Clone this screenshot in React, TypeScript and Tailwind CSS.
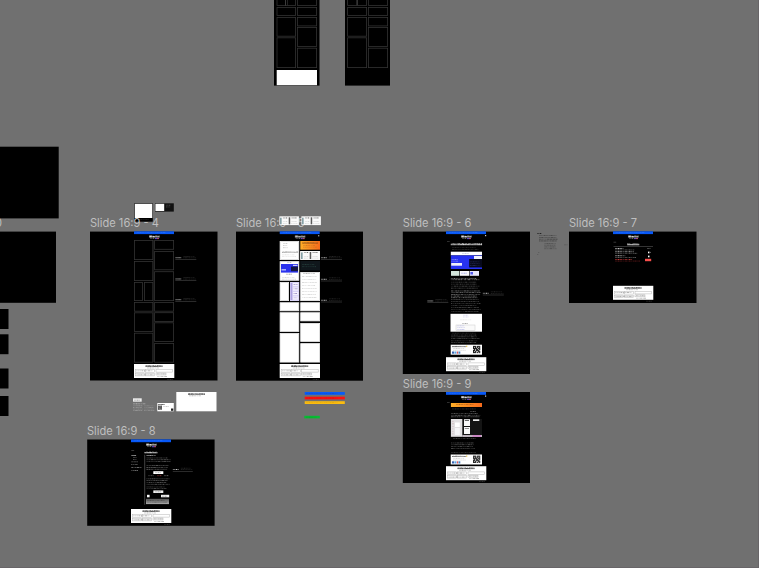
import type { ReactNode } from "react";

type Box = [number, number, number, number];

// Rectangle given by its two corners, in canvas units.
function R({ b, f, o = 1 }: { b: Box; f: string; o?: number }) {
  return <rect x={b[0]} y={b[1]} width={b[2] - b[0]} height={b[3] - b[1]} fill={f} opacity={o} />;
}

function random(seed: number) {
  let s = Math.round(seed * 7919) + 13;
  return () => {
    s = (s * 1103515245 + 12345) % 2147483648;
    return s / 2147483648;
  };
}

// Lines of copy, too small to read at this zoom, shown as runs of word-sized dashes.
function Greek({ b, f = "#aaa", step = 1.8, h = 0.7, o = 1, seed = 1 }: { b: Box; f?: string; step?: number; h?: number; o?: number; seed?: number }) {
  const words: ReactNode[] = [];
  const rnd = random(seed);
  for (let y = b[1]; y < b[3] - 0.2; y += step) {
    let x = b[0];
    const end = b[2] - rnd() * (b[2] - b[0]) * 0.15;
    while (x < end) {
      const w = Math.min(0.6 + rnd() * 2.2, end - x);
      words.push(<rect key={words.length} x={x} y={y} width={w} height={h} fill={f} opacity={0.4 + rnd() * 0.6} />);
      x += w + 0.4;
    }
  }
  return <g opacity={o}>{words}</g>;
}

// A bold heading: letter-sized blocks of uneven height and weight.
function Title({ b, f = "#fff", seed = 1 }: { b: Box; f?: string; seed?: number }) {
  const rnd = random(seed);
  const letters: ReactNode[] = [];
  const tall = b[3] - b[1];
  for (let x = b[0]; x < b[2]; x += 0.95) {
    const drop = rnd() * 0.35 * tall;
    letters.push(<rect key={letters.length} x={x} y={b[1] + drop} width={0.85} height={tall - drop} fill={f} opacity={0.6 + rnd() * 0.4} />);
  }
  return <>{letters}</>;
}

function Cells({ cells, f = "none", stroke = "#333" }: { cells: Box[]; f?: string; stroke?: string }) {
  return (
    <>
      {cells.map((c, i) => (
        <rect key={i} x={c[0] + 0.4} y={c[1] + 0.4} width={c[2] - c[0] - 0.8} height={c[3] - c[1] - 0.8} fill={f} stroke={stroke} strokeWidth={0.8} />
      ))}
    </>
  );
}

function Header({ x, y = 231.3 }: { x: number; y?: number }) {
  return (
    <>
      <R b={[x, y, x + 40, y + 2.8]} f="#0758f8" />
      <Greek b={[x + 3, y + 1, x + 37, y + 1.6]} f="#5b9bff" o={0.4} />
      <Title b={[x + 15.2, y + 4, x + 25.2, y + 6.2]} seed={2} />
      <Greek b={[x + 16, y + 6.9, x + 21, y + 7.6]} f="#999" />
      <R b={[x + 21, y + 6.8, x + 23, y + 7.8]} f="#6a50d8" />
      <R b={[x + 23, y + 6.8, x + 25, y + 7.8]} f="#c0507c" />
    </>
  );
}

function Footer({ x, y }: { x: number; y: number }) {
  return (
    <>
      <R b={[x, y, x + 40.3, y + 14]} f="#fff" />
      <Title b={[x + 11.5, y + 1.2, x + 28, y + 2.9]} f="#222" seed={6} />
      <Greek b={[x + 13, y + 3.6, x + 27, y + 4.2]} f="#888" />
      <g fill="none" stroke="#b5b5b5" strokeWidth={0.5}>
        <rect x={x + 1.5} y={y + 5.7} width={9} height={2.6} />
        <rect x={x + 11.5} y={y + 5.7} width={9} height={2.6} />
        <rect x={x + 22} y={y + 5.7} width={16.5} height={2.4} />
        <rect x={x + 1.5} y={y + 9.5} width={9} height={2.4} />
        <rect x={x + 11.5} y={y + 9.5} width={9} height={2.4} />
        <rect x={x + 22} y={y + 9} width={10} height={2} />
      </g>
      <Greek b={[x + 2.5, y + 6.5, x + 20, y + 11.5]} f="#555" step={4} o={0.7} seed={3} />
      <Greek b={[x + 23, y + 9.6, x + 33, y + 12.5]} f="#666" step={2.4} o={0.7} seed={4} />
      <Greek b={[x + 33, y + 15, x + 40, y + 15.6]} f="#888" o={0.5} />
    </>
  );
}

function Note({ x, y, w = 21 }: { x: number; y: number; w?: number }) {
  return (
    <>
      <Greek b={[x, y + 1.3, x + 7, y + 2]} f="#ddd" h={0.9} />
      <Greek b={[x + 8, y, x + w, y + 2.4]} f="#777" step={1.5} o={0.5} />
      <R b={[x, y + 3.2, x + w, y + 3.8]} f="#777" o={0.6} />
    </>
  );
}

// QR symbol built from a small module grid.
function Qr({ x, y, s = 7.2 }: { x: number; y: number; s?: number }) {
  const rows = ["1110111", "1010101", "1111011", "0101101", "1101110", "1010011", "1110101"];
  const m = s / 7;
  return (
    <>
      <R b={[x, y, x + s, y + s]} f="#bbb" />
      {rows.flatMap((r, j) => r.split("").map((c, i) => (c === "1" ? <rect key={`${i}-${j}`} x={x + i * m} y={y + j * m} width={m} height={m} fill="#181818" /> : null)))}
    </>
  );
}

function Contact({ y }: { y: number }) {
  return (
    <>
      <R b={[450.7, y, 482, y + 10]} f="#fff" />
      <Title b={[452, y + 1.2, 465.5, y + 2.4]} f="#333" />
      <R b={[466, y + 1, 467.3, y + 2.3]} f="#e5c558" />
      <Greek b={[453, y + 3.4, 466, y + 5.5]} f="#999" o={0.7} />
      <R b={[452, y + 6.8, 454, y + 9]} f="#3a66b0" />
      <R b={[454.4, y + 6.8, 456.4, y + 9]} f="#5aa5e4" />
      <R b={[456.8, y + 6.8, 458.2, y + 9]} f="#d85662" />
      <R b={[458.5, y + 6.8, 460.3, y + 9]} f="#4584c4" />
      <Qr x={473} y={y + 1.2} />
    </>
  );
}

// A node on the canvas. Its box is widened to whole pixels, so the artwork keeps fractional edges.
function Frame({ b, fill = true, children }: { b: Box; fill?: boolean; children?: ReactNode }) {
  const x = Math.floor(b[0]);
  const y = Math.floor(b[1]);
  const w = Math.ceil(b[2]) - x;
  const h = Math.ceil(b[3]) - y;
  return (
    <div className="absolute" style={{ left: x, top: y, width: w, height: h }}>
      <svg className="block size-full" viewBox={`${x} ${y} ${w} ${h}`}>
        {fill && <R b={b} f="#000" />}
        {children}
      </svg>
    </div>
  );
}

function Label({ x, y, children }: { x: number; y: number; children: ReactNode }) {
  return (
    <div className="absolute whitespace-nowrap text-[11.1px] leading-4 text-[#bfbfbf]" style={{ left: x, top: y }}>
      {children}
    </div>
  );
}

const wireLeft = (l: number, r: number): Box[] => [
  [l, -4, r, 5.8], [l, 7, r, 15.8], [l, 17, r, 36.6], [l, 37.4, r, 68],
];
const wireRight = (l: number, r: number): Box[] => [
  [l, -4, r, 5.8], [l, 7, r, 15.8], [l, 17, r, 26.3], [l, 27, r, 46.8], [l, 47.8, r, 68],
];

const slide4Cells: Box[] = [
  [134, 240, 153.2, 260], [134, 261, 153.2, 281], [134, 282, 142.8, 301], [144, 282, 153.2, 301],
  [134, 302, 153.2, 311.6], [134, 312.4, 153.2, 332], [134, 332.8, 153.2, 362.6],
  [154.2, 240, 174, 249.7], [154.2, 251, 174, 270.2], [154.2, 271.3, 174, 301], [154.2, 302, 174, 311.6],
  [154.2, 312.3, 174, 321.8], [154.2, 322.4, 174, 342], [154.2, 343, 174, 362.6],
];

const slide5Cells: Box[] = [
  [279.7, 241, 299.2, 260], [279.7, 261.2, 299.2, 280.7], [279.7, 282, 289, 301],
  [279.7, 302.3, 299.2, 311.2], [279.7, 312.3, 299.2, 331.8], [279.7, 333, 299.2, 362.5],
  [300.3, 251, 320, 260], [300.3, 272, 320, 301], [300.3, 302.3, 320, 311.2],
  [300.3, 312.3, 320, 321.3], [300.3, 323, 320, 341.8], [300.3, 343.2, 320, 362.5],
];

const plainFrames: Box[] = [
  [0, 146.7, 58.7, 218.4], [0, 231.6, 56, 302.8], [0, 309, 8.5, 329], [0, 334.3, 8.5, 354.2],
  [0, 368.5, 8.5, 388.5], [0, 396, 8.5, 416],
];

function Cards({ x, y }: { x: number; y: number }) {
  return (
    <>
      <R b={[x, y, x + 19.5, y + 8.8]} f="#fafafa" />
      <R b={[x + 1, y + 1.4, x + 2, y + 8]} f="#3b6670" />
      <R b={[x + 9.3, y + 1, x + 10.8, y + 8]} f="#333" o={0.8} />
      <Greek b={[x + 3.5, y + 1.3, x + 8.5, y + 3]} f="#333" />
      <Greek b={[x + 3.5, y + 5, x + 8.5, y + 7.5]} f="#aaa" o={0.6} />
      <Greek b={[x + 12, y + 1.3, x + 18.5, y + 3]} f="#333" />
      <Greek b={[x + 12, y + 5, x + 18.5, y + 7.5]} f="#aaa" o={0.6} />
    </>
  );
}

export default function App() {
  return (
    <main className="relative h-[568px] w-[759px] overflow-hidden border-r border-b border-[#686568] bg-[#707070] font-['Inter','Liberation_Sans',sans-serif]">
      <Frame b={[274, 0, 319.5, 85.6]}>
        <Cells cells={[...wireLeft(276.6, 296), ...wireRight(297, 317)]} />
        <R b={[285, 0, 285.7, 5.5]} f="#555" />
        <R b={[287, 0, 287.7, 5.5]} f="#333" />
        <R b={[276.7, 70, 317, 85.2]} f="#fff" />
      </Frame>
      <Frame b={[345, 0, 390, 85.6]}>
        <Cells cells={[...wireLeft(347.2, 367), ...wireRight(368, 388)]} />
        <R b={[356.3, 0, 358, 5.5]} f="#333" />
      </Frame>

      {plainFrames.map((b, i) => (
        <Frame key={i} b={b} />
      ))}
      <Label x={-5} y={215}>0</Label>

      {/* Loose pieces over slide 4 */}
      <Frame b={[134, 203, 174, 222]} fill={false}>
        <R b={[134.3, 203.3, 152.8, 221.7]} f="#000" />
        <R b={[134.8, 203.8, 152.3, 218]} f="#fff" />
        <Greek b={[135.5, 219.3, 151, 221]} f="#666" o={0.6} />
        <R b={[155, 203.3, 173.8, 211.6]} f="#111" />
        <R b={[155.4, 203.8, 164.2, 211]} f="#fff" />
        <Greek b={[166, 204.8, 171, 207.5]} f="#888" o={0.7} />
      </Frame>

      <Frame b={[90, 231.6, 217.5, 380.5]}>
        <R b={[153.2, 240, 154.2, 362]} f="#1c1c1c" />
        <Cells cells={slide4Cells} />
        <Header x={134} />
        <Note x={175.3} y={256} />
        <Note x={175.3} y={277.2} />
        <Note x={175.3} y={298} />
        <Footer x={134} y={364} />
      </Frame>
      <Label x={90} y={215}>Slide 16:9 - 4</Label>

      {/* Loose pieces under slide 4 */}
      <Frame b={[133, 391, 218, 412]} fill={false}>
        <R b={[133, 398.3, 141.7, 401.7]} f="#eee" />
        <Greek b={[134, 399.8, 141, 400.3]} f="#777" />
        <Greek b={[133, 403.5, 148, 404.3]} f="#ddd" />
        <Greek b={[133, 405.5, 143, 411]} f="#d4d4d4" step={1.6} o={0.55} seed={5} />
        <Greek b={[144, 405.5, 155, 411]} f="#d4d4d4" step={1.6} o={0.45} seed={6} />
        <R b={[157.3, 403, 173.8, 411.3]} f="#fff" />
        <Title b={[158, 404, 164, 405]} f="#222" />
        <Qr x={158} y={405.7} s={4} />
        <R b={[171, 408.5, 173.3, 410.8]} f="#222" />
        <Greek b={[163, 406.3, 170, 407]} f="#aaa" />
        <R b={[176.3, 392, 216.5, 411.3]} f="#fff" />
        <Title b={[188, 393.2, 205, 394.8]} f="#222" seed={6} />
        <Greek b={[189, 395.5, 203, 396.1]} f="#888" />
      </Frame>

      <Frame b={[236, 231.6, 363, 380.7]}>
        <Header x={279.7} />
        <R b={[318, 235.3, 319.3, 236.3]} f="#ccc" />
        <Cells cells={slide5Cells} f="#fff" stroke="#f0f0f0" />
        {/* first card: short list with a heading under it */}
        <Greek b={[283, 243, 288, 249]} f="#777" o={0.6} step={2.2} />
        <Title b={[282, 251.5, 297.5, 252.6]} f="#666" />
        <Greek b={[282, 254.5, 297, 258]} f="#aaa" o={0.5} />
        {/* hero preview */}
        <Greek b={[287, 262.3, 292, 263]} f="#999" />
        <R b={[281, 264, 298, 272.6]} f="#2a32ed" />
        <R b={[291, 266.6, 298, 271.2]} f="#131540" />
        <R b={[293, 264.8, 297.5, 266]} f="#ccccfa" />
        <R b={[281.5, 269.3, 286, 270.4]} f="#dde0ff" />
        <Greek b={[286, 273.8, 293, 275]} f="#666" />
        <Greek b={[282, 277, 297, 279.5]} f="#999" o={0.6} />
        <R b={[290, 282, 299.2, 301]} f="#d9d3f6" />
        <R b={[290.6, 283, 292.2, 300]} f="#8d80d2" o={0.6} />
        {[283, 287.5, 292, 296.5].map((y) => (
          <g key={y}>
            <R b={[293, y, 298.3, y + 3.1]} f="#f5f2ff" />
            <Greek b={[293.5, y + 1, 297.8, y + 2]} f="#7668ae" seed={y} />
          </g>
        ))}
        <defs>
          <linearGradient id="sunset" x1="0" x2="1">
            <stop offset="0" stopColor="#ffae28" />
            <stop offset="1" stopColor="#f66b1c" />
          </linearGradient>
        </defs>
        <rect x={300.3} y={241} width={19.7} height={8.7} fill="url(#sunset)" />
        <Title b={[302, 242.2, 318, 243.6]} f="#704018" seed={3} />
        <Greek b={[303, 245, 317, 248]} f="#8d4e1d" o={0.55} />
        <Cards x={300.4} y={251} />
        <R b={[300.3, 261, 320, 270.5]} f="#10171c" />
        <Greek b={[302, 264, 317, 268]} f="#3e7061" step={2.4} o={0.65} />
        <Greek b={[303, 273.3, 317, 274.2]} f="#888" />
        <Greek b={[302, 276, 317, 300]} f="#888" o={0.5} step={3} h={0.6} seed={8} />
        <Note x={321} y={256} />
        <Note x={321} y={277.5} />
        <Note x={321} y={298.5} />
        <Footer x={279.7} y={364} />
      </Frame>
      <Label x={236} y={215}>Slide 16:9 - 5</Label>
      <Frame b={[279, 216, 322, 226]} fill={false}>
        <Cards x={279.4} y={216.3} />
        <Cards x={301.4} y={216.3} />
      </Frame>

      {/* Notification bars */}
      <Frame b={[304, 391, 346, 420]} fill={false}>
        <R b={[304.7, 392, 344.8, 394.8]} f="#075bf8" />
        <Greek b={[306, 393.1, 343, 393.8]} f="#0038a0" o={0.4} />
        <R b={[304.7, 396.7, 344.8, 399.4]} f="#ff1010" />
        <Greek b={[306, 397.7, 343, 398.3]} f="#960808" o={0.45} />
        <R b={[304.7, 401.2, 344.8, 404]} f="#fbbc10" />
        <Greek b={[306, 402.3, 343, 402.9]} f="#b07c00" o={0.35} />
        <R b={[304.3, 415.8, 319.8, 418.4]} f="#08bd33" />
        <Greek b={[306, 416.8, 318, 417.3]} f="#087c22" o={0.5} />
      </Frame>

      <Frame b={[402.8, 231.6, 530, 374]}>
        <Header x={446} />
        <R b={[485, 235, 486.2, 236.2]} f="#ccc" />
        <Greek b={[447, 241.3, 450.5, 241.9]} f="#777" />
        <Title b={[450.8, 243.1, 481.5, 245.2]} seed={4} />
        <Greek b={[452, 247, 480, 250]} f="#777" step={2.2} o={0.5} />
        <R b={[450.8, 251.7, 482, 255.4]} f="#fff" />
        <Greek b={[462, 253.3, 470, 253.8]} f="#7075a8" o={0.6} />
        <R b={[450.8, 255.4, 482, 269]} f="#2732f1" />
        <R b={[469.2, 259, 482, 267.4]} f="#07091b" />
        <R b={[474, 256, 482, 259]} f="#f1f1fb" />
        <Greek b={[451.5, 259, 459, 261.5]} f="#b8bbff" />
        <R b={[451.2, 263, 462, 265.7]} f="#eeeefa" />
        <Greek b={[470, 261.5, 481, 266]} f="#444b88" o={0.7} />
        <R b={[451, 271, 459.4, 275.8]} f="#d3e6dc" />
        <R b={[460, 271, 469, 275.8]} f="#f8f8fb" />
        <R b={[469.6, 271, 479, 275.8]} f="#e6e6fd" />
        <R b={[470.4, 272, 473, 274.5]} f="#5058ed" />
        <Greek b={[461, 272.8, 468, 274.3]} f="#777de2" />
        <Greek b={[450.8, 278, 481, 280]} f="#ddd" step={1.4} o={0.8} />
        <Greek b={[451, 281.8, 480, 289]} f="#999" step={2} o={0.65} seed={11} />
        <Greek b={[451, 290.6, 481, 298]} f="#bbb" step={1.7} o={0.8} seed={12} />
        <Greek b={[451, 299, 481, 312]} f="#999" step={2} o={0.6} seed={13} />
        <R b={[450.5, 313.8, 482, 331.7]} f="#fff" />
        <Greek b={[463, 314.8, 469, 317]} f="#a0a0d8" o={0.7} />
        <Greek b={[460, 319.5, 473, 321]} f="#bbb" o={0.5} />
        <Greek b={[462, 323, 469, 323.5]} f="#777" />
        <rect x={456} y={325} width={19} height={5.5} fill="#fafafa" stroke="#ccc" strokeWidth={0.5} />
        <Greek b={[457, 325.5, 466, 330]} f="#999ade" o={0.7} />
        <Greek b={[452, 332.8, 480, 333.5]} f="#777" o={0.6} />
        <Greek b={[451, 334.7, 481, 339]} f="#aaa" o={0.6} />
        <Greek b={[451, 340.5, 481, 343.3]} f="#999" o={0.6} seed={4} />
        <Contact y={344.7} />
        <Note x={482.8} y={291.5} />
        <Note x={427.3} y={299.2} />
        <Footer x={446} y={357.2} />
      </Frame>
      <Label x={402.8} y={215}>Slide 16:9 - 6</Label>

      {/* Loose list beside slide 6 */}
      <Frame b={[536, 231, 569, 257]} fill={false}>
        <Greek b={[537, 233, 542, 233.8]} f="#111" h={0.9} />
        <Greek b={[539, 235.2, 558, 241]} f="#222" step={1.8} o={0.75} seed={3} />
        <Greek b={[544, 243, 557, 250]} f="#333" step={1.8} o={0.7} seed={7} />
        <Greek b={[564, 244.5, 568, 245]} f="#333" o={0.6} />
        <Greek b={[538, 252, 539.5, 253]} f="#333" o={0.7} />
        <Greek b={[537, 254, 538.5, 255]} f="#333" o={0.7} />
      </Frame>

      <Frame b={[569, 231.6, 696.5, 303]}>
        <Header x={613} />
        <Greek b={[613.5, 241.8, 617, 242.4]} f="#888" />
        <Title b={[627, 243.3, 639, 245.3]} seed={5} />
        <R b={[613.5, 246.4, 653, 247]} f="#555" />
        <Greek b={[615, 248, 625, 249]} f="#eee" h={0.9} />
        <Greek b={[615, 249.6, 638, 250.3]} f="#999" />
        <Greek b={[647, 248.2, 651, 249]} f="#aaa" />
        <Greek b={[615, 251.3, 637, 252.4]} f="#ddd" h={0.9} />
        <Greek b={[615, 252.9, 641, 253.8]} f="#999" />
        <R b={[648, 251.6, 649.5, 253.3]} f="#fff" />
        <R b={[649.5, 251.9, 651, 253]} f="#555" />
        <Greek b={[615, 255.3, 627, 256.2]} f="#ddd" h={0.9} />
        <Greek b={[615, 257, 640, 257.7]} f="#999" />
        <R b={[648, 255.6, 649.5, 257.3]} f="#fff" />
        <Greek b={[615, 259, 635, 260]} f="#ec4141" h={0.9} />
        <Greek b={[615, 260.7, 644, 261.4]} f="#982929" />
        <R b={[645, 258.8, 651.2, 261.2]} f="#f94f4c" />
        <Footer x={613} y={285.8} />
      </Frame>
      <Label x={569} y={215}>Slide 16:9 - 7</Label>

      <Frame b={[402.8, 392, 530, 483]}>
        <Header x={446} y={392} />
        <R b={[485, 395.5, 486.2, 396.7]} f="#ccc" />
        <Greek b={[447, 402.3, 450.5, 402.9]} f="#777" />
        <rect x={450.9} y={403} width={31.1} height={4} fill="url(#sunset)" />
        <Greek b={[456, 404, 477, 405]} f="#8f4d17" h={0.9} o={0.8} />
        <Greek b={[452, 408.6, 480, 409.2]} f="#888" o={0.6} />
        <Greek b={[470, 411, 477, 411.5]} f="#888" />
        <Greek b={[451, 413.3, 482, 417.5]} f="#bbb" step={1.6} o={0.7} />
        <R b={[450.9, 419, 482, 436.8]} f="#141414" />
        <R b={[450.9, 419, 462.3, 436.8]} f="#e2e0e2" />
        <R b={[455, 422.5, 459.8, 427]} f="#fff" />
        <R b={[455, 428, 459.8, 435]} f="#f5f5f7" />
        <Greek b={[452, 421, 454, 434]} f="#ba8f94" o={0.7} step={2.5} />
        <R b={[464, 419.2, 470, 426]} f="#fafafa" />
        <R b={[464, 427, 470, 434]} f="#fafafa" />
        <R b={[464.8, 420, 469, 421]} f="#666" />
        <R b={[464.8, 428, 469, 428.8]} f="#777" />
        <R b={[473, 419.3, 479.3, 421]} f="#ececec" />
        <R b={[462.3, 435.2, 482, 436.8]} f="#e8dce8" />
        <R b={[472.5, 435.4, 481, 436.6]} f="#d46bc8" />
        <Greek b={[453, 438.3, 480, 440]} f="#aaa" step={1.5} o={0.6} />
        <Greek b={[451, 442.6, 475, 449.5]} f="#999" step={1.8} o={0.65} seed={9} />
        <Greek b={[451, 452, 480, 452.8]} f="#999" o={0.5} />
        <Contact y={454.5} />
        <Footer x={446} y={466.2} />
      </Frame>
      <Label x={402.8} y={376}>Slide 16:9 - 9</Label>

      <Frame b={[87.2, 439.5, 214.6, 525.8]}>
        <Header x={131} y={439.4} />
        <Greek b={[131.3, 450.2, 135, 450.8]} f="#888" />
        <Title b={[144.3, 451.6, 157.5, 453.3]} seed={3} />
        <Greek b={[131.3, 455, 137, 455.9]} f="#eee" h={0.9} />
        <Greek b={[133, 457, 137, 459.5]} f="#888" step={2} />
        {[461.5, 464.3, 467.2, 470.2].map((y, i) => (
          <Greek key={y} b={[131.3, y, i === 2 ? 143 : 138, y + 0.6]} f="#aaa" h={0.7} seed={i + 2} />
        ))}
        <R b={[144.6, 454.7, 145.1, 504.7]} f="#888" />
        <Greek b={[146.4, 455, 157.5, 456]} f="#ddd" h={0.9} />
        <Greek b={[146.4, 457.6, 171, 463]} f="#aaa" step={1.8} o={0.7} />
        <Greek b={[146.4, 465.3, 170, 470]} f="#aaa" step={1.8} o={0.7} seed={2} />
        <R b={[153.3, 471.2, 163.3, 474]} f="#fff" />
        <Greek b={[155, 472.4, 162, 472.9]} f="#777" />
        <Greek b={[148, 475.4, 155, 476]} f="#999" o={0.7} />
        <Greek b={[157, 475.4, 162, 476]} f="#c24545" />
        <Greek b={[164, 475.4, 169, 476]} f="#999" />
        <Greek b={[146.4, 478.5, 170, 484.5]} f="#aaa" step={1.8} o={0.7} seed={5} />
        <Greek b={[146.4, 486.6, 168, 488.7]} f="#aaa" step={1.6} o={0.6} />
        <R b={[153.3, 490.4, 163.3, 493]} f="#eee" />
        <Greek b={[155, 491.5, 162, 492]} f="#777" />
        <R b={[147, 494.8, 149.6, 497.3]} f="#fff" />
        <R b={[161, 494.8, 169.2, 497.3]} f="#f5f5f5" />
        <Greek b={[162, 495.8, 168, 496.4]} f="#777" />
        <defs>
          <linearGradient id="panel" x1="0" x2="0" y1="0" y2="1">
            <stop offset="0" stopColor="#555" />
            <stop offset="1" stopColor="#aaa" />
          </linearGradient>
        </defs>
        <rect x={146} y={498.8} width={23} height={5.3} fill="url(#panel)" />
        <Greek b={[147, 500, 168, 503]} f="#222" o={0.6} />
        <Note x={172.8} y={467.8} w={20} />
        <Footer x={131} y={509} />
      </Frame>
      <Label x={87} y={423}>Slide 16:9 - 8</Label>
    </main>
  );
}
